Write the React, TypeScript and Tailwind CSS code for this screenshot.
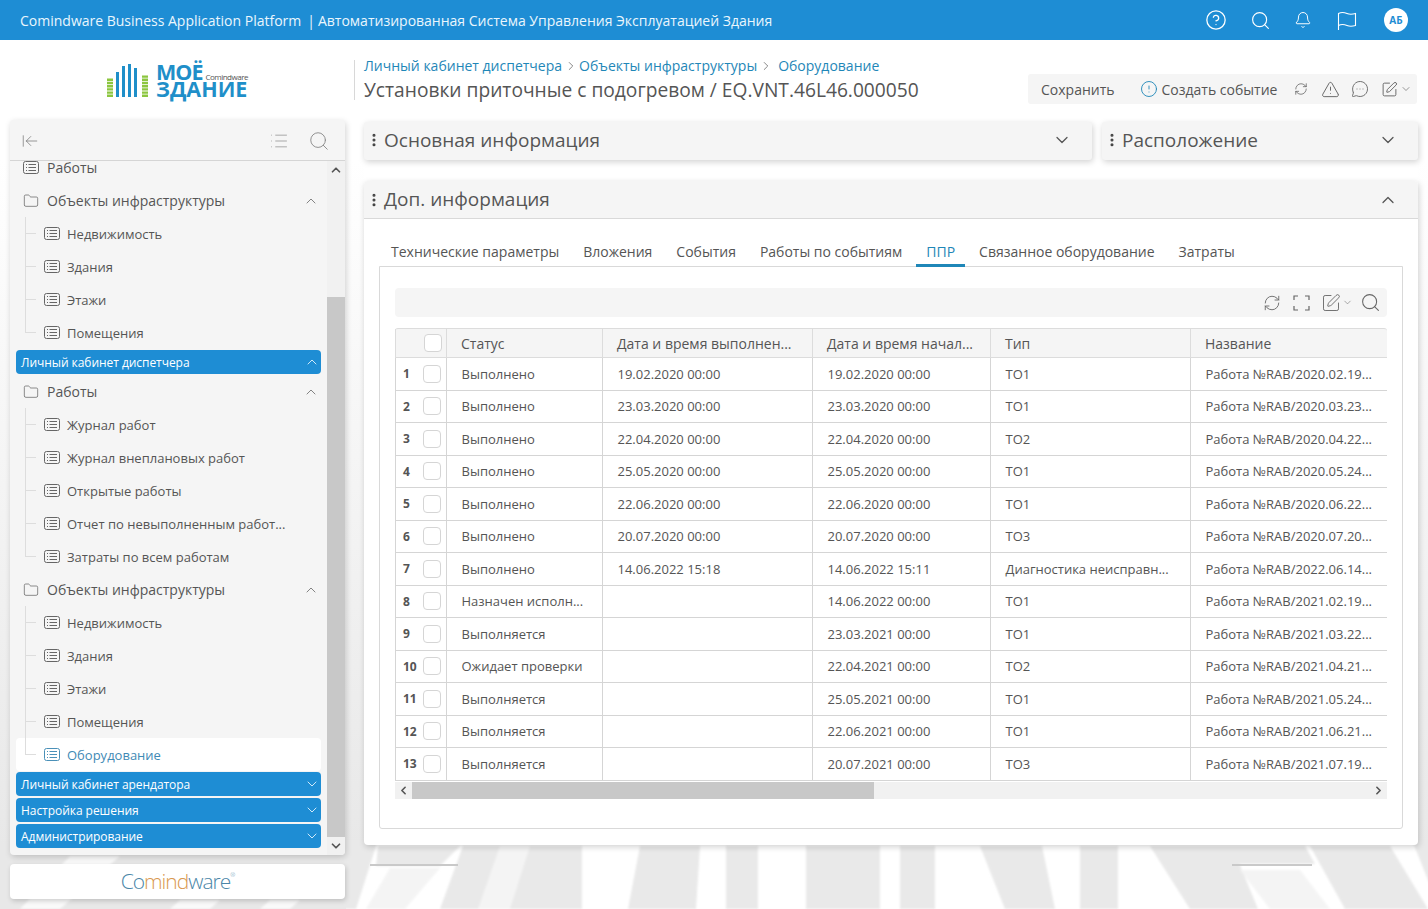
import React from "react";
import {
  CircleHelp, Search, Bell, RefreshCw, TriangleAlert, MessageCircleMore, SquarePen,
  ChevronDown, ChevronUp, ChevronLeft, ChevronRight, ArrowLeftToLine, Folder, CircleAlert, List, EllipsisVertical,
} from "lucide-react";

const ListBox = ({ active }: { active?: boolean }) => (
  <svg width="16" height="13" viewBox="0 0 16 13" fill="none" stroke={active ? "#4a90b8" : "#666"} strokeWidth="1" className="shrink-0">
    <rect x="0.5" y="0.5" width="15" height="12" rx="2" />
    <path d="M3 3.5h1M3 6.5h1M3 9.5h1M5.5 3.5H13M5.5 6.5H13M5.5 9.5H13" />
  </svg>
);

const Top = ({ t }: { t: string }) => (
  <div className="flex items-center h-[33px] pl-[7px] pr-[2px] text-[14px] text-[#555]">
    <Folder size={16} strokeWidth={1} className="text-[#555] mr-[8px] shrink-0" />
    <span>{t}</span>
    <ChevronUp size={16} strokeWidth={1.2} className="ml-auto text-[#666]" />
  </div>
);

const Sub = ({ t, last, active }: { t: string; last?: boolean; active?: boolean }) => (
  <div className={`flex items-center h-[33px] pl-[9px] text-[13px] rounded-[4px] ${active ? "bg-white text-[#3f8ab5]" : "text-[#555]"}`}>
    <span className={`relative w-[12px] mr-[7px] border-l border-[#dddddd] shrink-0 self-start ${last ? "h-[17px]" : "h-[33px]"}`}>
      <span className="absolute top-[16px] left-0 w-[10px] border-t border-[#dddddd]" />
    </span>
    <ListBox active={active} />
    <span className="ml-[7px] pt-[2px] whitespace-nowrap">{t}</span>
  </div>
);

const Blue = ({ t, open, cls }: { t: string; open?: boolean; cls: string }) => (
  <div className={`flex items-center h-[24px] pl-[5px] pr-[1px] bg-[#1e8dd4] rounded-[4px] text-white text-[12px] ${cls}`}>
    <span className="pt-[2px] tracking-[-0.05px]">{t}</span>
    {open ? (
      <ChevronUp size={16} strokeWidth={1.5} className="ml-auto text-[#cfe9f9]" />
    ) : (
      <ChevronDown size={16} strokeWidth={1.5} className="ml-auto text-[#cfe9f9]" />
    )}
  </div>
);

const rows = [
  ["Выполнено", "19.02.2020 00:00", "19.02.2020 00:00", "ТО1", "Работа №RAB/2020.02.19..."],
  ["Выполнено", "23.03.2020 00:00", "23.03.2020 00:00", "ТО1", "Работа №RAB/2020.03.23..."],
  ["Выполнено", "22.04.2020 00:00", "22.04.2020 00:00", "ТО2", "Работа №RAB/2020.04.22..."],
  ["Выполнено", "25.05.2020 00:00", "25.05.2020 00:00", "ТО1", "Работа №RAB/2020.05.24..."],
  ["Выполнено", "22.06.2020 00:00", "22.06.2020 00:00", "ТО1", "Работа №RAB/2020.06.22..."],
  ["Выполнено", "20.07.2020 00:00", "20.07.2020 00:00", "ТО3", "Работа №RAB/2020.07.20..."],
  ["Выполнено", "14.06.2022 15:18", "14.06.2022 15:11", "Диагностика неисправн...", "Работа №RAB/2022.06.14..."],
  ["Назначен исполн...", "", "14.06.2022 00:00", "ТО1", "Работа №RAB/2021.02.19..."],
  ["Выполняется", "", "23.03.2021 00:00", "ТО1", "Работа №RAB/2021.03.22..."],
  ["Ожидает проверки", "", "22.04.2021 00:00", "ТО2", "Работа №RAB/2021.04.21..."],
  ["Выполняется", "", "25.05.2021 00:00", "ТО1", "Работа №RAB/2021.05.24..."],
  ["Выполняется", "", "22.06.2021 00:00", "ТО1", "Работа №RAB/2021.06.21..."],
  ["Выполняется", "", "20.07.2021 00:00", "ТО3", "Работа №RAB/2021.07.19..."],
];

const cols = "grid grid-cols-[51px_156px_210px_178px_200px_197px]";
const heads = ["Статус", "Дата и время выполнен...", "Дата и время начал...", "Тип", "Название"];
const tabs = ["Технические параметры", "Вложения", "События", "Работы по событиям", "ППР", "Связанное оборудование", "Затраты"];

const CardHead = ({ t, cls, open }: { t: string; cls: string; open?: boolean }) => (
  <div className={`flex items-center bg-[#f5f5f5] text-[19px] text-[#555] ${cls}`}>
    <EllipsisVertical size={16} strokeWidth={2.6} className="ml-[2px] mr-[2px] text-[#444]" />
    <span>{t}</span>
    {open ? (
      <ChevronUp size={20} strokeWidth={1.5} className="ml-auto mr-[20px] text-[#555]" />
    ) : (
      <ChevronDown size={20} strokeWidth={1.5} className="ml-auto mr-[20px] text-[#555]" />
    )}
  </div>
);

const Backdrop = () => (
  <svg className="absolute inset-0" width="1428" height="909" viewBox="0 0 1428 909">
    <defs>
      <linearGradient id="fade" x1="0" y1="0" x2="0" y2="1">
        <stop offset="0" stopColor="#ffffff" />
        <stop offset="0.3" stopColor="#f8f8f8" />
        <stop offset="1" stopColor="#e8e8e8" />
      </linearGradient>
      <filter id="soft" x="-5%" y="-5%" width="110%" height="110%">
        <feGaussianBlur stdDeviation="1.2" />
      </filter>
    </defs>
    <rect width="1428" height="909" fill="#ffffff" />
    <rect x="0" y="160" width="364" height="686" fill="url(#fade)" />
    <rect x="1418" y="160" width="10" height="686" fill="url(#fade)" />
    <rect x="0" y="846" width="346" height="63" fill="#e8e8e8" />
    <g filter="url(#soft)">
      <g fill="#fafafa">
        <polygon points="70,856 120,856 60,909 20,909" />
        <polygon points="180,900 220,900 210,909 170,909" />
        <polygon points="270,900 300,900 290,909 260,909" />
      </g>
      <g fill="#e9e9e9">
        <polygon points="340,840 378,840 356,909 340,909" />
        <polygon points="378,846 460,846 440,866 376,866" />
        <polygon points="463,846 582,846 582,909 440,909" />
        <polygon points="640,846 700,846 696,909 628,909" />
        <polygon points="726,846 758,846 758,909 726,909" />
        <polygon points="806,846 880,846 880,909 806,909" />
        <polygon points="900,846 935,846 935,909 900,909" />
        <polygon points="980,846 1042,846 1055,909 1005,909" />
        <polygon points="1080,846 1118,846 1118,909 1080,909" />
        <polygon points="1150,846 1232,846 1258,909 1190,909" />
        <polygon points="1232,846 1305,846 1315,864 1232,864" />
        <polygon points="1310,846 1390,846 1428,909 1345,909" />
        <polygon points="1412,840 1430,840 1430,885" />
      </g>
      <g fill="#f4f4f4">
        <polygon points="500,846 530,846 510,909 478,909" />
        <polygon points="1240,870 1300,870 1330,909 1270,909" />
        <polygon points="390,868 440,868 405,909 366,909" />
      </g>
    </g>
    <rect x="370" y="864" width="88" height="2" fill="#c9c9c9" />
    <rect x="1232" y="864" width="80" height="2" fill="#c9c9c9" />
  </svg>
);

export default function App() {
  return (
    <div className="relative w-full h-[909px] overflow-hidden text-[#555]" style={{ fontFamily: '"Open Sans", "Noto Sans", sans-serif' }}>
      <Backdrop />
      <div className="relative flex flex-col h-full">
        <header className="flex items-center h-[40px] bg-[#1e8dd4] text-[14px] text-[#eaf6fd] pl-[20px] shrink-0">
          <span>Comindware Business Application Platform</span>
          <span className="ml-[6px] mr-[3px]">|</span>
          <span>Автоматизированная Система Управления Эксплуатацией Здания</span>
          <div className="ml-auto flex items-center text-white">
            <CircleHelp size={22} strokeWidth={1.4} />
            <Search size={21} strokeWidth={1.3} className="ml-[23px]" />
            <Bell size={18} strokeWidth={1.3} className="ml-[23px]" />
            <svg width="20" height="20" viewBox="0 0 20 20" fill="none" stroke="currentColor" strokeWidth="1.1" className="ml-[25px] mt-[1px]">
              <path d="M1.5 19V2.5c3-1.5 6-1 8.5 0s5 1 8.5 0v12c-3.5 1-6 1-8.5 0s-5.5-1.5-8.5 0" />
            </svg>
            <span className="ml-[27px] mr-[20px] w-[24px] h-[24px] rounded-full bg-white text-[#1e8dd4] text-[10px] font-bold flex items-center justify-center">АБ</span>
          </div>
        </header>

        <div className="flex flex-1 min-h-0">
          <aside className="w-[354px] shrink-0 pl-[10px] pr-[9px] flex flex-col">
            <div className="h-[80px] flex items-center justify-center shrink-0">
              <svg width="42" height="34" viewBox="0 0 42 34" className="mr-[7px] mt-[2px]">
                <g stroke="#8cc63f" strokeWidth="6" strokeDasharray="2.4 0.8">
                  <path d="M3 33V14" />
                  <path d="M38 33V11" />
                </g>
                <g fill="#1f8fc9">
                  <rect x="9" y="8" width="3" height="25" />
                  <rect x="15" y="2" width="3" height="31" />
                  <rect x="21" y="0" width="3" height="33" />
                  <rect x="27" y="4" width="3" height="29" />
                </g>
              </svg>
              <div className="flex flex-col font-bold text-[#1f8fc9] w-[92px]">
                <div className="flex items-end h-[20px]">
                  <span className="text-[21.5px] leading-[20px] tracking-[-1px]">МОЁ</span>
                  <span className="text-[8px] leading-[10px] font-normal text-[#555] tracking-[-0.5px] ml-[3px]">Comindware</span>
                </div>
                <span className="text-[21.5px] leading-[20px] mt-[-3px]">ЗДАНИЕ</span>
              </div>
            </div>
            <div className="h-[735px] rounded-[4px] bg-[#f5f5f5] shadow-[1px_2px_6px_rgba(0,0,0,0.18)] flex flex-col overflow-hidden shrink-0">
              <div className="h-[41px] pt-[2px] flex items-center border-b border-[#d5d5d5] shrink-0">
                <ArrowLeftToLine size={18} strokeWidth={1} className="ml-[11px] text-[#777]" />
                <List size={20} strokeWidth={1} className="ml-auto text-[#999]" />
                <Search size={22} strokeWidth={1} className="ml-[19px] mr-[15px] text-[#888]" />
              </div>
              <div className="flex flex-1 min-h-0">
                <div className="flex-1 min-w-0 px-[6px] overflow-hidden">
                  <div className="mt-[-10px]">
                    <div className="flex items-center h-[33px] pl-[7px] text-[14px]">
                      <ListBox />
                      <span className="ml-[8px]">Работы</span>
                    </div>
                    <Top t="Объекты инфраструктуры" />
                    <Sub t="Недвижимость" />
                    <Sub t="Здания" />
                    <Sub t="Этажи" />
                    <Sub t="Помещения" last />
                    <Blue t="Личный кабинет диспетчера" open cls="mt-[0.5px] mb-[1.5px]" />
                    <Top t="Работы" />
                    <Sub t="Журнал работ" />
                    <Sub t="Журнал внеплановых работ" />
                    <Sub t="Открытые работы" />
                    <Sub t="Отчет по невыполненным работ..." />
                    <Sub t="Затраты по всем работам" last />
                    <Top t="Объекты инфраструктуры" />
                    <Sub t="Недвижимость" />
                    <Sub t="Здания" />
                    <Sub t="Этажи" />
                    <Sub t="Помещения" />
                    <Sub t="Оборудование" last active />
                    <Blue t="Личный кабинет арендатора" cls="mt-[0.5px] mb-[2px]" />
                    <Blue t="Настройка решения" cls="mb-[2px]" />
                    <Blue t="Администрирование" cls="" />
                  </div>
                </div>
                <div className="w-[18px] shrink-0 flex flex-col bg-[#f1f1f1]">
                  <div className="h-[18px] flex items-center justify-center"><ChevronUp size={14} strokeWidth={3} className="text-[#555]" /></div>
                  <div className="h-[118px]" />
                  <div className="flex-1 bg-[#c8c8c8]" />
                  <div className="h-[18px] flex items-center justify-center"><ChevronDown size={14} strokeWidth={3} className="text-[#555]" /></div>
                </div>
              </div>
            </div>
            <div className="mt-[9px] h-[35px] rounded-[4px] bg-white shadow-[1px_2px_5px_rgba(0,0,0,0.18)] flex items-center justify-center text-[21px] font-light tracking-[-1px] shrink-0">
              <span className="text-[#4a86a8]">Co</span>
              <span className="text-[#d9984f]">mind</span>
              <span className="text-[#4a86a8]">ware</span>
              <span className="text-[#4a86a8] text-[6px] self-start mt-[7px]">®</span>
            </div>
          </aside>

          <main className="flex-1 min-w-0 pl-[10px] pr-[10px] flex flex-col">
            <div className="h-[82px] ml-[-10px] flex items-start justify-between shrink-0">
              <div className="mt-[20px] h-[40px] border-l border-[#d8d8d8] pl-[9px] flex flex-col">
                <div className="flex items-center text-[14px] text-[#1f87b8] h-[12px] leading-none">
                  <span>Личный кабинет диспетчера</span>
                  <ChevronRight size={14} strokeWidth={1.2} className="text-[#555] mx-[1.5px]" />
                  <span>Объекты инфраструктуры</span>
                  <ChevronRight size={14} strokeWidth={1.2} className="text-[#555] mx-[2px]" />
                  <span className="ml-[3px]">Оборудование</span>
                </div>
                <div className="text-[19.2px] text-[#555] leading-none mt-[8px] whitespace-nowrap">Установки приточные с подогревом / EQ.VNT.46L46.000050</div>
              </div>
              <div className="mt-[34px] h-[30px] w-[389px] ml-auto mr-[1px] bg-[#f5f5f5] rounded-[3px] flex items-center text-[14px] text-[#555]">
                <span className="ml-[13px]">Сохранить</span>
                <CircleAlert size={18} strokeWidth={1.2} className="ml-[25px] text-[#1f87b8]" />
                <span className="ml-[4px]">Создать событие</span>
                <RefreshCw size={14} strokeWidth={1.2} className="ml-[17px]" />
                <TriangleAlert size={19} strokeWidth={1.1} className="ml-[13px]" />
                <MessageCircleMore size={18} strokeWidth={1.1} className="ml-[11px]" />
                <SquarePen size={17} strokeWidth={1.2} className="ml-[12px]" />
                <ChevronDown size={12} strokeWidth={1.2} className="ml-[2px]" />
              </div>
            </div>

            <div className="flex gap-[10px] shrink-0">
              <CardHead t="Основная информация" cls="w-[728px] h-[38px] pb-[2px] rounded-[3px] shadow-[1px_2px_6px_rgba(0,0,0,0.18)]" />
              <CardHead t="Расположение" cls="flex-1 h-[38px] pb-[2px] rounded-[3px] shadow-[1px_2px_6px_rgba(0,0,0,0.18)]" />
            </div>

            <section className="mt-[21px] h-[664px] bg-white rounded-[4px] shadow-[1px_2px_6px_rgba(0,0,0,0.18)] overflow-hidden shrink-0 flex flex-col">
              <CardHead t="Доп. информация" open cls="h-[38px] border-b border-[#d9d9d9] shrink-0" />
              <div className="flex px-[15px] mt-[14px] h-[34px] text-[14px] text-[#555] shrink-0">
                {tabs.map((t) => (
                  <div key={t} className={`px-[10px] mx-[2px] flex items-center h-[34px] pt-[5px] border-b-[3px] ${t === "ППР" ? "text-[#1f87b8] border-[#1f87b8] z-10" : "border-transparent"}`}>{t}</div>
                ))}
              </div>
              <div className="mx-[15px] border border-[#d9d9d9] rounded-b-[3px] h-[563px] mt-[-1px] px-[15px] pt-[21px] shrink-0">
                <div className="h-[29px] bg-[#f5f5f5] rounded-[4px] flex items-center justify-end pr-[6px] text-[#666]">
                  <RefreshCw size={18} strokeWidth={1.2} />
                  <svg width="17" height="16" viewBox="0 0 17 16" fill="none" stroke="#666" strokeWidth="1.2" className="ml-[12px]">
                    <path d="M1 5V1h4M12 1h4v4M16 11v4h-4M5 15H1v-4" />
                  </svg>
                  <SquarePen size={20} strokeWidth={1.1} className="ml-[11px]" />
                  <ChevronDown size={11} strokeWidth={1.2} className="ml-[1px]" />
                  <Search size={21} strokeWidth={1.2} className="ml-[7px]" />
                </div>
                <div className="mt-[11px]">
                  <div className={`${cols} h-[30px] bg-[#f5f5f5] border-t border-b border-[#dcdcdc] rounded-t-[3px] text-[14px]`}>
                    <div className="flex items-center justify-end pr-[4px] border-l border-[#dcdcdc]">
                      <span className="w-[18px] h-[18px] rounded-[4px] border border-[#d5d5d5] bg-white" />
                    </div>
                    {heads.map((h) => (
                      <div key={h} className="flex items-center pl-[14px] border-l border-[#dcdcdc] whitespace-nowrap overflow-hidden">{h}</div>
                    ))}
                  </div>
                  {rows.map((r, i) => (
                    <div key={i} className={`${cols} h-[32.5px] border-b border-[#d5d5d5] text-[13px]`}>
                      <div className="flex items-center border-l border-[#d5d5d5] pl-[7px]">
                        <span className="w-[20px] text-[12px] font-bold pt-[1px]">{i + 1}</span>
                        <span className="w-[18px] h-[18px] rounded-[4px] border border-[#d5d5d5] bg-white" />
                      </div>
                      {r.map((c, j) => (
                        <div key={j} className="flex items-center pl-[14.5px] pt-[1px] border-l border-[#d5d5d5] whitespace-nowrap overflow-hidden">{c}</div>
                      ))}
                    </div>
                  ))}
                  <div className="mt-[1px] h-[17px] bg-[#f1f1f1] flex items-center">
                    <div className="w-[17px] flex justify-center"><ChevronLeft size={13} strokeWidth={3} className="text-[#555]" /></div>
                    <div className="w-[462px] h-full bg-[#c8c8c8]" />
                    <div className="ml-auto w-[17px] flex justify-center"><ChevronRight size={13} strokeWidth={3} className="text-[#555]" /></div>
                  </div>
                </div>
              </div>
            </section>
          </main>
        </div>
      </div>
    </div>
  );
}
